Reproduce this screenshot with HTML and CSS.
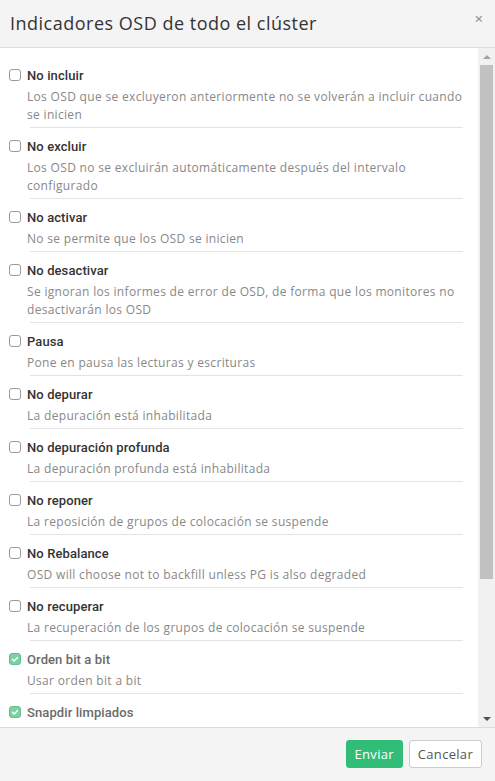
FILE: index.html
```html
<!DOCTYPE html>
<html lang="es">
<head>
<meta charset="utf-8">
<link rel="stylesheet" href="styles.css">
</head>
<body>
<div class="modal">
  <div class="header">
    <h1 class="title">Indicadores OSD de todo el clúster</h1>
    <span class="close">×</span>
  </div>
  <div class="body">
    <div class="list">
      <div class="item"><div class="row"><span class="cb"></span><span class="lbl">No incluir</span></div><div class="desc">Los OSD que se excluyeron anteriormente no se volverán a incluir cuando se inicien</div></div>
      <div class="item"><div class="row"><span class="cb"></span><span class="lbl">No excluir</span></div><div class="desc">Los OSD no se excluirán automáticamente después del intervalo configurado</div></div>
      <div class="item"><div class="row"><span class="cb"></span><span class="lbl">No activar</span></div><div class="desc">No se permite que los OSD se inicien</div></div>
      <div class="item"><div class="row"><span class="cb"></span><span class="lbl">No desactivar</span></div><div class="desc">Se ignoran los informes de error de OSD, de forma que los monitores no desactivarán los OSD</div></div>
      <div class="item"><div class="row"><span class="cb"></span><span class="lbl">Pausa</span></div><div class="desc">Pone en pausa las lecturas y escrituras</div></div>
      <div class="item"><div class="row"><span class="cb"></span><span class="lbl">No depurar</span></div><div class="desc">La depuración está inhabilitada</div></div>
      <div class="item"><div class="row"><span class="cb"></span><span class="lbl">No depuración profunda</span></div><div class="desc">La depuración profunda está inhabilitada</div></div>
      <div class="item"><div class="row"><span class="cb"></span><span class="lbl">No reponer</span></div><div class="desc">La reposición de grupos de colocación se suspende</div></div>
      <div class="item"><div class="row"><span class="cb"></span><span class="lbl">No Rebalance</span></div><div class="desc">OSD will choose not to backfill unless PG is also degraded</div></div>
      <div class="item"><div class="row"><span class="cb"></span><span class="lbl">No recuperar</span></div><div class="desc">La recuperación de los grupos de colocación se suspende</div></div>
      <div class="item disabled"><div class="row"><span class="cb checked"><svg viewBox="0 0 12 12" width="12" height="12"><path d="M3.4 6.2 L5.2 8 L8.6 4.4" fill="none" stroke="#fff" stroke-width="1.4" stroke-linecap="round" stroke-linejoin="round"/></svg></span><span class="lbl">Orden bit a bit</span></div><div class="desc">Usar orden bit a bit</div></div>
      <div class="item disabled"><div class="row"><span class="cb checked"><svg viewBox="0 0 12 12" width="12" height="12"><path d="M3.4 6.2 L5.2 8 L8.6 4.4" fill="none" stroke="#fff" stroke-width="1.4" stroke-linecap="round" stroke-linejoin="round"/></svg></span><span class="lbl">Snapdir limpiados</span></div></div>
    </div>
    <div class="scrollbar">
      <div class="arrow up"></div>
      <div class="track"><div class="thumb"></div></div>
      <div class="arrow down"></div>
    </div>
  </div>
  <div class="footer">
    <button class="btn primary">Enviar</button>
    <button class="btn">Cancelar</button>
  </div>
</div>
</body>
</html>
```
FILE: styles.css
```css
html, body {
  margin: 0;
  padding: 0;
  height: 100%;
}
body {
  font-family: "Open Sans", "Noto Sans", sans-serif;
  color: #333;
  background: #fff;
}
.modal {
  display: flex;
  flex-direction: column;
  height: 781px;
  width: 495px;
  overflow: hidden;
}
.header {
  height: 47px;
  flex: none;
  background: #f4f4f4;
  border-bottom: 1px solid #dcdcdc;
  display: flex;
  align-items: center;
  justify-content: space-between;
  padding: 0 12px 0 10px;
}
.title {
  margin: 0;
  font-size: 18px;
  font-weight: 400;
  color: #333;
  letter-spacing: 0.5px;
  padding-bottom: 1px;
}
.close {
  font-size: 15px;
  color: #999;
  font-weight: 600;
  align-self: flex-start;
  margin-top: 8px;
}
.body {
  flex: 1;
  display: flex;
  min-height: 0;
}
.list {
  flex: 1;
  overflow: hidden;
  padding: 18px 15px 0 9px;
}
.item {
  border-bottom: 1px solid #e3e3e3;
  margin-left: 21px;
  padding-bottom: 3px;
  margin-bottom: 9px;
}
.item:last-child {
  border-bottom: none;
}
.row {
  display: flex;
  align-items: center;
  height: 18px;
  margin-left: -21px;
}
.cb {
  width: 10px;
  height: 10px;
  border: 1px solid #9a9a9a;
  border-radius: 3px;
  background: #fff;
  margin-right: 6px;
  flex: none;
  display: flex;
  align-items: center;
  justify-content: center;
}
.cb.checked {
  background: #7ed0a3;
  border-color: #5fc28c;
}
.cb svg { flex: none; }
.lbl {
  font-family: Roboto, "Open Sans", sans-serif;
  font-size: 13px;
  font-weight: 500;
  color: #333;
  letter-spacing: 0.1px;
}
.disabled .lbl { color: #6a6a6a; }
.desc {
  margin-top: 4px;
  margin-left: -3px;
  font-size: 12px;
  line-height: 18px;
  color: #888;
  letter-spacing: 0.32px;
}
.scrollbar {
  width: 17px;
  flex: none;
  background: #f1f1f1;
  display: flex;
  flex-direction: column;
  align-items: center;
}
.arrow {
  height: 17px;
  width: 17px;
  flex: none;
  display: flex;
  align-items: center;
  justify-content: center;
}
.arrow::before {
  content: "";
  width: 0;
  height: 0;
  border-left: 4px solid transparent;
  border-right: 4px solid transparent;
}
.arrow.up::before { border-bottom: 4px solid #a3a3a3; }
.arrow.down::before { border-top: 4px solid #505050; }
.track {
  flex: 1;
  width: 100%;
  display: flex;
  justify-content: center;
}
.thumb {
  width: 13px;
  height: 514px;
  background: #c1c1c1;
}
.footer {
  flex: none;
  background: #f4f4f4;
  border-top: 1px solid #dcdcdc;
  display: flex;
  justify-content: flex-end;
  align-items: flex-start;
  padding: 12px 13px 0 0;
  box-sizing: border-box;
  height: 54px;
  gap: 6px;
}
.btn {
  font-family: "Open Sans", "Noto Sans", sans-serif;
  font-size: 13px;
  letter-spacing: 0.3px;
  height: 28px;
  padding: 0 8px;
  border: 1px solid #ccc;
  background: #fff;
  color: #555;
  border-radius: 3px;
}
.btn.primary {
  background: #2fbd77;
  border-color: #2fbd77;
  color: #fff;
}
```
